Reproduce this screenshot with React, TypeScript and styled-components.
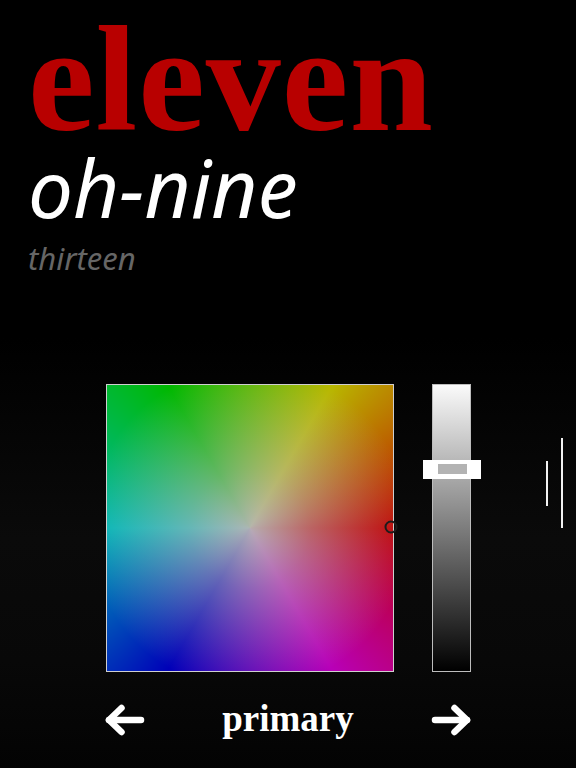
import React from 'react';
import styled, { createGlobalStyle } from 'styled-components';

const GlobalStyle = createGlobalStyle`
  html, body {
    margin: 0;
    padding: 0;
    background: #000;
  }
  * { box-sizing: border-box; }
`;

const Page = styled.div`
  width: 576px;
  height: 768px;
  overflow: hidden;
  display: flex;
  flex-direction: column;
  background: linear-gradient(#000 0%, #000 44%, #0a0a0a 70%, #080808 86%, #030303 100%);
`;

const Header = styled.header`
  padding-left: 28px;
  display: flex;
  flex-direction: column;
`;

const Title = styled.h1`
  margin: 4px 0 0;
  font-family: "Liberation Serif", serif;
  font-weight: 700;
  font-size: 150px;
  line-height: 150px;
  color: #b80000;
  letter-spacing: 1px;
`;

const Subtitle = styled.h2`
  margin: 0;
  font-family: "Noto Sans", sans-serif;
  font-style: italic;
  font-weight: 400;
  font-size: 80px;
  line-height: 66px;
  color: #fff;
`;

const Caption = styled.p`
  margin: 18px 0 0;
  font-family: "Noto Sans", sans-serif;
  font-style: italic;
  font-size: 31px;
  line-height: 40px;
  color: #666;
`;

const PickerRow = styled.section`
  margin-top: 106px;
  padding-left: 106px;
  display: flex;
  align-items: flex-start;
`;

const ColorField = styled.div`
  position: relative;
  width: 288px;
  height: 288px;
  border: 1px solid #cfcfcf;
  background:
    radial-gradient(circle farthest-corner at 50% 50%, rgba(182, 182, 182, 0.95) 0%, rgba(182, 182, 182, 0.55) 30%, rgba(182, 182, 182, 0) 80%),
    conic-gradient(from 30deg at 50% 50%, #b8b800, #c00000 60deg, #b800b8 120deg, #0000b8 180deg, #00b8b8 240deg, #00b800 300deg, #b8b800 360deg);
`;

const FieldMarker = styled.span`
  position: absolute;
  width: 13px;
  height: 13px;
  border: 2px solid #1c1c1c;
  border-radius: 50%;
  transform: translate(-50%, -50%);
`;

const Slider = styled.div`
  position: relative;
  width: 39px;
  height: 288px;
  margin-left: 38px;
  border: 1px solid #bdbdbd;
  background: linear-gradient(#fafafa, #000);
`;

const Thumb = styled.div`
  position: absolute;
  left: -10px;
  width: 58px;
  height: 19px;
  background: #fff;
  display: flex;
  align-items: center;
  justify-content: center;
`;

const ThumbGrip = styled.span`
  width: 29px;
  height: 10px;
  background: #b3b3b3;
`;

const Marks = styled.div`
  margin-left: 75px;
  display: flex;
  align-items: flex-start;
  gap: 13px;
`;

const Mark = styled.span<{ $top: number; $len: number }>`
  display: block;
  width: 2px;
  height: ${p => p.$len}px;
  margin-top: ${p => p.$top}px;
  background: #f2f2f2;
`;

const NavRow = styled.nav`
  margin-top: 24px;
  margin-left: 105px;
  width: 366px;
  height: 48px;
  display: flex;
  align-items: center;
  justify-content: space-between;
`;

const NavButton = styled.button`
  width: 40px;
  height: 32px;
  padding: 0;
  border: none;
  background: none;
  cursor: pointer;
  display: flex;
`;

const ModeLabel = styled.span`
  font-family: "Liberation Serif", serif;
  font-weight: 700;
  font-size: 37px;
  line-height: 48px;
  color: #fff;
  margin-top: -2px;
`;

const Arrow = ({ dir }: { dir: 'left' | 'right' }) => (
  <svg width="40" height="32" viewBox="0 0 40 32" fill="none">
    <g
      stroke="#fff"
      strokeWidth="6.5"
      strokeLinecap="round"
      strokeLinejoin="round"
      transform={dir === 'right' ? 'translate(40 0) scale(-1 1)' : undefined}
    >
      <path d="M4 16H36" />
      <path d="M16.5 4L4 16L16.5 28" />
    </g>
  </svg>
);

export default function App() {
  const value = 0.26; // slider position, 0 = top
  return (
    <>
      <GlobalStyle />
      <Page>
        <Header>
          <Title>eleven</Title>
          <Subtitle>oh-nine</Subtitle>
          <Caption>thirteen</Caption>
        </Header>

        <PickerRow>
          <ColorField>
            <FieldMarker style={{ left: 284, top: 142 }} />
          </ColorField>
          <Slider>
            <Thumb style={{ top: value * 288 }}>
              <ThumbGrip />
            </Thumb>
          </Slider>
          <Marks>
            <Mark $top={77} $len={45} />
            <Mark $top={54} $len={90} />
          </Marks>
        </PickerRow>

        <NavRow>
          <NavButton aria-label="previous">
            <Arrow dir="left" />
          </NavButton>
          <ModeLabel>primary</ModeLabel>
          <NavButton aria-label="next">
            <Arrow dir="right" />
          </NavButton>
        </NavRow>
      </Page>
    </>
  );
}
